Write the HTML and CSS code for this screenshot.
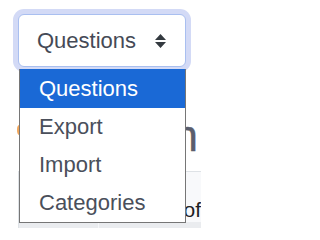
FILE: index.html
```html
<!DOCTYPE html>
<html>
<head>
<meta charset="utf-8">
<link rel="stylesheet" href="styles.css">
</head>
<body>
<div class="page">
  <div class="select">
    <span class="select-label">Questions</span>
    <svg class="select-arrow" width="11" height="14" viewBox="0 0 11 14"><path d="M5.5 0 L11 6 L0 6 Z M0 8 L11 8 L5.5 14 Z" fill="#343a40"/></svg>
  </div>
  <div class="heading-row">
    <span class="help-icon"></span>
    <h2 class="heading">Question</h2>
  </div>
  <div class="table">
    <div class="row head">
      <div class="cell first"></div>
      <div class="cell rest">of</div>
    </div>
    <div class="row band">
      <div class="cell band-a"></div>
      <div class="cell band-b"></div>
    </div>
  </div>
  <ul class="menu">
    <li class="item active">Questions</li>
    <li class="item">Export</li>
    <li class="item">Import</li>
    <li class="item">Categories</li>
  </ul>
</div>
</body>
</html>
```

FILE: styles.css
```css
html, body {
  margin: 0;
  padding: 0;
  background: #ffffff;
}
body {
  width: 201px;
  height: 228px;
  overflow: hidden;
  font-family: "Liberation Sans", Arial, sans-serif;
}
.page {
  position: relative;
  padding-top: 14px;
  height: 228px;
  box-sizing: border-box;
}
.select {
  margin-left: 18px;
  width: 168px;
  height: 53px;
  box-sizing: border-box;
  border: 1px solid #a9bff0;
  border-radius: 6px;
  box-shadow: 0 0 0 5px #d3daf6;
  background: #fff;
  display: flex;
  align-items: center;
  padding-left: 18px;
  padding-right: 19px;
  justify-content: space-between;
}
.select-label {
  font-size: 22px;
  color: #454a56;
}
.select-arrow {
  display: block;
}
.heading-row {
  display: flex;
  justify-content: space-between;
  align-items: flex-start;
  margin-top: 44px;
  padding-right: 3px;
  height: 60px;
}
.help-icon {
  margin-left: 17px;
  margin-top: 14px;
  width: 10px;
  height: 10px;
  border-radius: 50%;
  background: #f2a65a;
}
.heading {
  margin: 0;
  font-size: 44px;
  font-weight: 400;
  line-height: 50px;
  color: #5a5d6c;
  white-space: nowrap;
  -webkit-text-stroke: 0.4px #5a5d6c;
}
.table {
  margin-left: 18px;
  border-top: 1px solid #dee2e6;
  border-left: 1px solid #dee2e6;
}
.row {
  display: flex;
}
.head {
  height: 50px;
  background: #f8f9fb;
}
.cell.first {
  width: 167px;
}
.cell.rest {
  font-size: 21px;
  color: #1d2125;
  padding-top: 26px;
  padding-left: 1px;
}
.band {
  height: 10px;
  background: #eaecef;
}
.band-a {
  width: 79px;
  border-right: 1px solid #f6f7f9;
}
.menu {
  position: absolute;
  left: 19px;
  top: 69px;
  width: 167px;
  box-sizing: border-box;
  margin: 0;
  padding: 0;
  list-style: none;
  background: #fff;
  border: 1px solid #767676;
  border-top: none;
}
.item {
  height: 38px;
  line-height: 38px;
  padding-left: 19px;
  font-size: 22px;
  color: #4a4f5b;
}
.item.active {
  height: 39px;
  line-height: 39px;
  background: #1a69d6;
  color: #ffffff;
}
```
